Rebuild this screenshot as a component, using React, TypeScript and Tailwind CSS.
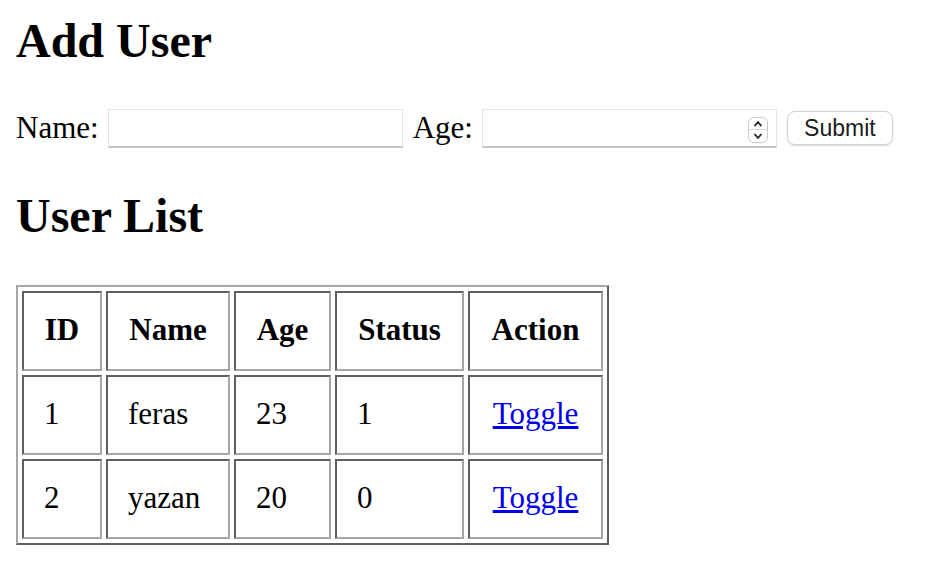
import { useState } from "react";

type User = {
    id: number;
    name: string;
    age: number;
    status: number;
};

const cell = "h-[80px] border-2 border-t-[#5f5f5f] border-l-[#5f5f5f] border-b-[#a6a6a6] border-r-[#a6a6a6] px-[20px] align-middle";

function Spinner() {
    return (
        <div className="absolute right-[8px] top-[7px] w-[20px] h-[26px] rounded-[6px] border border-[#c8c8c8] bg-white flex flex-col overflow-hidden">
            <div className="flex-1 flex items-center justify-center border-b border-[#d8d8d8]">
                <svg width="10" height="7" viewBox="0 0 10 7">
                    <path d="M2 5.5 L5 2 L8 5.5" fill="none" stroke="#222" strokeWidth="1.8" strokeLinecap="round" strokeLinejoin="round" />
                </svg>
            </div>
            <div className="flex-1 flex items-center justify-center">
                <svg width="10" height="7" viewBox="0 0 10 7">
                    <path d="M2 1.5 L5 5 L8 1.5" fill="none" stroke="#222" strokeWidth="1.8" strokeLinecap="round" strokeLinejoin="round" />
                </svg>
            </div>
        </div>
    );
}

export default function App() {
    const [users, setUsers] = useState<User[]>([
        { id: 1, name: "feras", age: 23, status: 1 },
        { id: 2, name: "yazan", age: 20, status: 0 },
    ]);
    const [name, setName] = useState("");
    const [age, setAge] = useState("");

    const toggle = (id: number) => {
        setUsers(prev => prev.map(u => (u.id === id ? { ...u, status: u.status ? 0 : 1 } : u)));
    };

    const submit = () => {
        if (!name || !age) return;
        setUsers(prev => [...prev, { id: prev.length + 1, name, age: parseInt(age), status: 0 }]);
        setName("");
        setAge("");
    };

    return (
        <div className="min-h-[578px] bg-white text-black px-[16px] pt-[14px] font-['Liberation_Serif',serif] text-[31px]">
            <h1 className="text-[48px] font-bold leading-[54px]">Add User</h1>

            {/* Form */}
            <div className="mt-[37px] flex items-center gap-[9.5px]">
                <span>Name:</span>
                <input
                    type="text"
                    value={name}
                    onChange={e => setName(e.target.value)}
                    className="w-[295px] h-[39px] bg-white border border-[#e3e3e3] border-b-2 border-b-[#c4c4c4] outline-none px-2 text-[24px]"
                />
                <span>Age:</span>
                <div className="relative w-[295px] h-[39px] bg-white border border-[#e3e3e3] border-b-2 border-b-[#c4c4c4]">
                    <input
                        type="text"
                        value={age}
                        onChange={e => setAge(e.target.value)}
                        className="w-full h-full outline-none px-2 text-[24px]"
                    />
                    <Spinner />
                </div>
                <button
                    onClick={submit}
                    className="w-[106px] h-[34px] rounded-[8px] border border-[#d2d2d2] bg-white shadow-[0_1px_2px_rgba(0,0,0,0.15)] font-['Liberation_Sans',sans-serif] text-[23px] text-[#1c1c1c] leading-none"
                >
                    Submit
                </button>
            </div>

            <h1 className="mt-[37px] text-[48px] font-bold leading-[54px]">User List</h1>

            {/* Table */}
            <table className="mt-[42px] border-separate border-spacing-[4px] border-2 border-t-[#a6a6a6] border-l-[#a6a6a6] border-b-[#5f5f5f] border-r-[#5f5f5f]">
                <thead>
                    <tr>
                        <th className={`${cell} w-[80px] text-center`}>ID</th>
                        <th className={`${cell} w-[124px] text-center`}>Name</th>
                        <th className={`${cell} w-[97px] text-center`}>Age</th>
                        <th className={`${cell} w-[129px] text-center`}>Status</th>
                        <th className={`${cell} w-[135px] text-center`}>Action</th>
                    </tr>
                </thead>
                <tbody>
                    {users.map(u => (
                        <tr key={u.id}>
                            <td className={`${cell} text-left`}>{u.id}</td>
                            <td className={`${cell} text-left`}>{u.name}</td>
                            <td className={`${cell} text-left`}>{u.age}</td>
                            <td className={`${cell} text-left`}>{u.status}</td>
                            <td className={`${cell} text-center`}>
                                <a href="#" onClick={e => { e.preventDefault(); toggle(u.id); }} className="text-[#0000ee] underline">
                                    Toggle
                                </a>
                            </td>
                        </tr>
                    ))}
                </tbody>
            </table>
        </div>
    );
}
